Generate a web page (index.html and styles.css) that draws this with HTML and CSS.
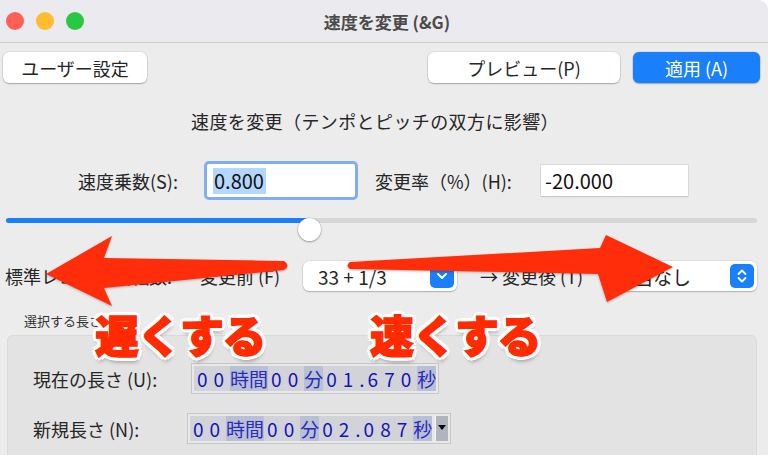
FILE: index.html
```html
<!DOCTYPE html>
<html lang="ja">
<head>
    <meta charset="UTF-8">
    <meta name="viewport" content="width=device-width, initial-scale=1.0">
    <title>速度を変更 (&amp;G)</title>
    <link rel="stylesheet" href="styles.css">
</head>
<body>
    <div class="window">
        <header class="titlebar">
            <div class="lights">
                <span class="light red"></span>
                <span class="light yellow"></span>
                <span class="light green"></span>
            </div>
            <div class="title">速度を変更 (&amp;G)</div>
            <div></div>
        </header>

        <div class="toolbar">
            <button class="btn btn-user">ユーザー設定</button>
            <button class="btn btn-preview">プレビュー(P)</button>
            <button class="btn btn-apply">適用 (A)</button>
        </div>

        <p class="heading">速度を変更（テンポとピッチの双方に影響）</p>

        <div class="speed-row">
            <span class="lbl lbl-mult">速度乗数(S):</span>
            <div class="field field-focus"><span class="sel">0.800</span></div>
            <span class="lbl lbl-pct">変更率（%）(H):</span>
            <div class="field field-pct">-20.000</div>
        </div>

        <div class="slider">
            <div class="track"><div class="fill" style="width: 304px"></div></div>
            <div class="thumb" style="left: 292px"></div>
        </div>

        <div class="rpm-row">
            <span class="lbl lbl-std">標準レコード回転数:</span>
            <span class="lbl lbl-before">変更前 (F)</span>
            <div class="select select-a">
                <span>33 + 1/3</span>
                <span class="stepper">
                    <svg width="12" height="8" viewBox="0 0 12 8"><path d="M2 2 L6 6 L10 2" fill="none" stroke="#fff" stroke-width="2" stroke-linecap="round" stroke-linejoin="round"/></svg>
                </span>
            </div>
            <span class="lbl lbl-after">→ 変更後 (T)</span>
            <div class="select select-b">
                <span>該当なし</span>
                <span class="stepper">
                    <svg width="12" height="18" viewBox="0 0 12 18"><path d="M2.5 7 L6 3.5 L9.5 7 M2.5 11 L6 14.5 L9.5 11" fill="none" stroke="#fff" stroke-width="1.8" stroke-linecap="round" stroke-linejoin="round"/></svg>
                </span>
            </div>
        </div>

        <div class="group-label">選択する長さ</div>
        <div class="group">
            <div class="len-row">
                <span class="lbl lbl-cur">現在の長さ (U):</span>
                <div class="timectl">
                    <span class="d">00</span><span class="u">時間</span><span class="d">00</span><span class="u">分</span><span class="d">01</span><span class="u dot">.</span><span class="d">670</span><span class="u">秒</span>
                </div>
            </div>
            <div class="len-row">
                <span class="lbl lbl-new">新規長さ (N):</span>
                <div class="timectl">
                    <span class="d">00</span><span class="u">時間</span><span class="d">00</span><span class="u">分</span><span class="d">02</span><span class="u dot">.</span><span class="d">087</span><span class="u">秒</span><span class="drop"></span>
                </div>
            </div>
        </div>

        <!-- annotation overlay -->
        <svg class="arrows" width="768" height="455" viewBox="0 0 768 455">
            <path d="M46 274 L112 236 L104 258 L284 261 Q291 265.5 284 270 L104 288 L112 306 Z" fill="#ff2d0a"/>
            <path d="M350 262 L600 248 L606 235 L673 267 L607 302 L598 274 L350 269 Q345 265.5 350 262 Z" fill="#ff2d0a"/>
        </svg>
        <div class="callout callout-slow">遅くする</div>
        <div class="callout callout-fast">速くする</div>
    </div>
</body>
</html>
```

FILE: styles.css
```css
body { margin: 0; background: #fff; font-family: "Noto Sans CJK JP", "Noto Sans", sans-serif; color: #262626; }
.window { position: relative; width: 768px; height: 455px; background: #ececec; border-top-right-radius: 10px; overflow: hidden; }

.titlebar { height: 42px; background: #ebeaef; border-bottom: 1px solid #cdcdcd; display: grid; grid-template-columns: 1fr auto 1fr; align-items: center; }
.lights { display: flex; gap: 12px; padding-left: 6px; }
.light { width: 18px; height: 18px; border-radius: 50%; }
.light.red { background: #fe5f57; }
.light.yellow { background: #febc2e; }
.light.green { background: #28c840; }
.title { font-size: 17px; font-weight: 700; color: #4b4b4b; margin-left: 6px; }

.toolbar { display: flex; padding: 9px 8px 0 3px; }
.btn { height: 31px; border: none; border-radius: 6px; background: #fff; box-shadow: 0 0 0 0.5px rgba(0,0,0,.12), 0 1px 1.5px rgba(0,0,0,.25); font-family: "Noto Sans CJK JP", sans-serif; font-size: 18px; color: #262626; padding: 0; }
.btn-user { width: 144px; }
.btn-preview { width: 192px; margin-left: auto; }
.btn-apply { width: 127px; margin-left: 13px; background: #1a7ffb; color: #fff; }

.heading { margin: 28px 0 0; font-size: 18px; line-height: 20px; text-align: center; padding-right: 18px; letter-spacing: 0.4px; }

.lbl { font-size: 18px; white-space: nowrap; }
.speed-row { display: flex; align-items: center; height: 39px; margin-top: 30px; padding-left: 78px; }
.lbl-mult { width: 129px; }
.lbl-pct { width: 166px; margin-left: 20px; }
.field { display: flex; align-items: center; background: #fff; font-size: 20px; color: #111; }
.field-focus { width: 142px; height: 33px; padding-left: 6px; box-shadow: 0 0 0 3px #80aeef; border-radius: 2px; }
.sel { background: #b3d7fe; line-height: 26px; padding: 0 2px 0 1px; }
.field-pct { width: 143px; height: 31px; padding-left: 4px; box-shadow: 0 0 0 0.5px #c9c9c9, 0 1px 1px rgba(0,0,0,.15); }

.slider { position: relative; height: 24px; margin: 18px 11px 0 6px; }
.track { margin-top: 9px; height: 5px; background: #d6d6d6; border-radius: 3px; overflow: hidden; }
.fill { height: 100%; background: #1a7ffb; }
.thumb { position: absolute; top: 0; width: 23px; height: 23px; border-radius: 50%; background: #fff; box-shadow: 0 0 0 0.5px rgba(0,0,0,.15), 0 1px 2px rgba(0,0,0,.3); }

.rpm-row { display: flex; align-items: center; height: 30px; margin-top: 19px; padding-left: 5px; }
.lbl-std { width: 195px; }
.lbl-before { width: 103px; }
.lbl-after { width: 127px; margin-left: 23px; }
.select { display: flex; align-items: center; height: 30px; background: #fff; border-radius: 6px; box-shadow: 0 0 0 0.5px rgba(0,0,0,.12), 0 1px 1.5px rgba(0,0,0,.22); font-size: 19px; box-sizing: border-box; }
.select-a { width: 154px; padding-left: 15px; }
.select-b { width: 150px; padding-left: 8px; }
.stepper { margin-left: auto; margin-right: 3px; width: 24px; height: 24px; border-radius: 5px; background: #1a7ffb; display: flex; align-items: center; justify-content: center; }

.group-label { margin-top: 21px; padding-left: 24px; font-size: 13px; line-height: 18px; color: #333; }
.group { margin: 5px 11px 0 7px; height: 130px; background: #e3e3e3; border: 1px solid #d9d9d9; border-radius: 6px; padding: 27px 0 0 25px; }
.len-row { display: flex; align-items: center; height: 31px; }
.len-row + .len-row { margin-top: 19px; }
.lbl-cur { width: 158px; }
.lbl-new { width: 154px; }
.timectl { display: flex; height: 31px; box-sizing: border-box; padding: 2px; background: #e8e8e8; border: 1px solid #c6c6c6; font-size: 19px; line-height: 25px; color: #1414b8; }
.timectl .d { background: #d2d3d8; letter-spacing: 6px; padding-left: 3px; }
.timectl .u { background: #bac0d4; color: #2a2ac0; }
.timectl .dot { background: #d2d3d8; color: #1414b8; }
.drop { width: 12px; margin-left: 3px; background: #b1b4bc; border-left: 1px solid #f4f4f4; position: relative; }
.drop::after { content: ""; position: absolute; left: 2px; top: 9px; border-left: 4.5px solid transparent; border-right: 4.5px solid transparent; border-top: 5px solid #000; }

.arrows { position: absolute; top: 0; left: 0; pointer-events: none; filter: drop-shadow(0 1px 1px rgba(0,0,0,.25)); }
.callout { position: absolute; top: 308px; font-size: 44px; line-height: 1.2; font-weight: 900; color: #ff2a00; letter-spacing: -1.5px;
    -webkit-text-stroke: 1.5px #ff2a00;
    text-shadow: 2px 0 #fff, -2px 0 #fff, 0 2px #fff, 0 -2px #fff, 2px 2px #fff, -2px -2px #fff, 2px -2px #fff, -2px 2px #fff,
        4px 0 #fff, -4px 0 #fff, 0 4px #fff, 0 -4px #fff, 3px 3px #fff, -3px -3px #fff, 3px -3px #fff, -3px 3px #fff,
        1px 5px 4px rgba(0,0,0,.35); }
.callout-slow { left: 95px; }
.callout-fast { left: 370px; }
```
